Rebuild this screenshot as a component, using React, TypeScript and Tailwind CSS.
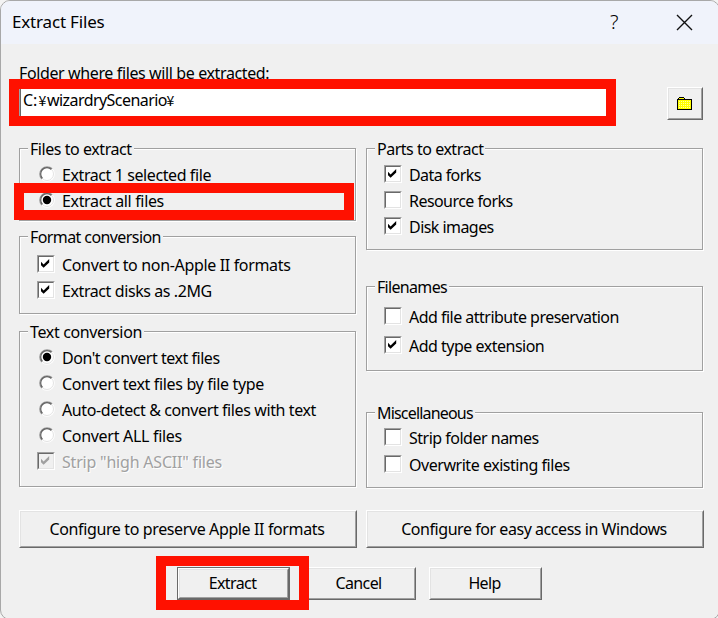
import type { ReactNode } from "react";

function CheckMark({ color }: { color: string }) {
  return (
    <svg width="14" height="14" viewBox="0 0 14 14" className="block">
      <path d="M2 4.8 L4.6 7.4 L10.2 2 V5.4 L4.6 10.8 L2 8.2 Z" fill={color} />
    </svg>
  );
}

function CheckBox({ checked, disabled }: { checked?: boolean; disabled?: boolean }) {
  return (
    <span className="block size-[18px] shrink-0 border border-t-[#a0a0a0] border-l-[#a0a0a0] border-r-white border-b-white">
      <span
        className={`block size-4 border border-t-[#696969] border-l-[#696969] border-r-[#e3e3e3] border-b-[#e3e3e3] ${disabled ? "bg-[#f0f0f0]" : "bg-white"}`}
      >
        {checked && <CheckMark color={disabled ? "#a0a0a0" : "#000000"} />}
      </span>
    </span>
  );
}

function Radio({ checked }: { checked?: boolean }) {
  return (
    <svg width="18" height="18" viewBox="0 0 18 18" className="block shrink-0">
      <circle cx="10" cy="9" r="7.8" fill="#ffffff" />
      <path d="M4.84 14.16 A7.3 7.3 0 0 1 15.16 3.84" fill="none" stroke="#959595" strokeWidth="1.3" />
      <path d="M5.54 13.46 A6.3 6.3 0 0 1 14.46 4.54" fill="none" stroke="#606060" strokeWidth="1.2" />
      <path d="M5.4 13.6 A6.5 6.5 0 0 0 14.6 4.4" fill="none" stroke="#e3e3e3" strokeWidth="1" />
      {checked && <circle cx="10" cy="9" r="4.2" fill="#000000" />}
    </svg>
  );
}

type OptionProps = {
  kind?: "check" | "radio";
  checked?: boolean;
  disabled?: boolean;
  height?: string;
  tracking?: string;
  children: ReactNode;
};

function Option({ kind = "check", checked, disabled, height = "h-[26px]", tracking = "", children }: OptionProps) {
  return (
    <label className={`flex items-center gap-[7px] ${height}`}>
      {kind === "radio" ? <Radio checked={checked} /> : <CheckBox checked={checked} disabled={disabled} />}
      <span
        className={`pt-0.5 whitespace-nowrap ${tracking} ${disabled ? "text-[#a0a0a0] [text-shadow:1px_1px_0_#fff]" : ""}`}
      >
        {children}
      </span>
    </label>
  );
}

type GroupProps = { title: string; box: string; tracking?: string; children: ReactNode };

function Group({ title, box, tracking = "", children }: GroupProps) {
  return (
    <section
      className={`w-[337px] border border-[#a0a0a0] pl-[17px] shadow-[1px_1px_0_#fff,inset_1px_1px_0_#fff] ${box}`}
    >
      <h2
        className={`-mt-[11px] -ml-[9px] flex h-[23px] w-fit items-start bg-[#f0f0f0] px-0.5 pt-px whitespace-nowrap ${tracking}`}
      >
        {title}
      </h2>
      {children}
    </section>
  );
}

function PushButton({ box, tracking = "", children }: { box: string; tracking?: string; children: ReactNode }) {
  return (
    <button
      className={`shrink-0 border border-t-white border-l-white border-r-[#696969] border-b-[#696969] ${box}`}
    >
      <span
        className={`flex size-full items-center justify-center border border-t-[#e3e3e3] border-l-[#e3e3e3] border-r-[#a0a0a0] border-b-[#a0a0a0] pr-0.5 whitespace-nowrap ${tracking}`}
      >
        {children}
      </span>
    </button>
  );
}

function FolderIcon() {
  return (
    <svg width="15" height="14" viewBox="0 0 15 14" shapeRendering="crispEdges">
      <defs>
        <pattern id="dither" width="2" height="2" patternUnits="userSpaceOnUse">
          <rect width="2" height="2" fill="#ffff00" />
          <rect width="1" height="1" fill="#ffffa0" />
        </pattern>
      </defs>
      <path d="M1 3 V1 H7 V3 H14 V12 H1 Z" fill="url(#dither)" />
      <path d="M2 0 H7 V1 H8 V2 H15 V13 H0 V2 H1 V1 H2 Z M1 3 V12 H14 V3 Z M2 1 V2 H7 V1 Z" fill="#000000" fillRule="evenodd" />
    </svg>
  );
}

function Yen() {
  return (
    <span className="w-[9px] text-center font-['Noto_Sans_CJK_JP','Noto_Sans',sans-serif] text-[14px] tracking-normal">
      ¥
    </span>
  );
}

export default function App() {
  return (
    <div className="relative h-[618px] w-[718px] overflow-hidden bg-[#f3f3f3] font-['Noto_Sans','Noto_Sans_CJK_JP',sans-serif] text-[16px] leading-5 text-black">
      <div className="h-[620px] w-[720px] overflow-hidden rounded-[10px] border border-[#a8a8a8] bg-[#f0f0f0]">
        <header className="flex h-[43px] items-center bg-[#f0f3fb] pl-[11px]">
          <h1 className="w-[597px] pb-0.5 text-[17px] tracking-[-0.18px]">Extract Files</h1>
          <span className="w-[67px] pb-0.5 pl-px text-[20px] font-light">?</span>
          <svg width="17" height="17" viewBox="0 0 17 17" fill="none" stroke="#111" strokeWidth="1.4">
            <path d="M1 1 L16 16 M16 1 L1 16" />
          </svg>
        </header>

        <main className="pl-[18px]">
          <div className="flex h-[76px] gap-[59px]">
            <div className="w-[589px] pt-[19px]">
              <p className="h-6 tracking-[-0.38px] whitespace-nowrap">Folder where files will be extracted:</p>
              <div className="h-[30px] border border-t-[#a0a0a0] border-l-[#a0a0a0] border-r-white border-b-white">
                <div className="flex size-full items-baseline border-t border-l border-[#696969] bg-white pt-px pl-[2px]">
                  <span className="w-[15px]">C:</span>
                  <Yen />
                  <span className="w-[119px] tracking-[-0.56px]">wizardryScenario</span>
                  <Yen />
                </div>
              </div>
            </div>
            <div className="pt-[43px]">
              <PushButton box="h-[33px] w-9">
                <FolderIcon />
              </PushButton>
            </div>
          </div>

          <div className="flex gap-2.5 pt-[28px]">
            <div className="flex flex-col">
              <Group title="Files to extract" tracking="tracking-[-0.44px]" box="h-[73px]">
                <Option kind="radio" tracking="tracking-[-0.41px]">Extract 1 selected file</Option>
                <Option kind="radio" tracking="tracking-[-0.35px]" checked>Extract all files</Option>
              </Group>
              <Group title="Format conversion" tracking="tracking-[-0.59px]" box="mt-[15px] h-[78px]">
                <div className="h-[2px]" />
                <Option tracking="tracking-[-0.34px]" checked>Convert to non-Apple II formats</Option>
                <Option tracking="tracking-[-0.41px]" checked>Extract disks as .2MG</Option>
              </Group>
              <Group title="Text conversion" tracking="tracking-[-0.35px]" box="mt-[17px] h-[156px]">
                <Option kind="radio" tracking="tracking-[-0.47px]" checked>Don't convert text files</Option>
                <Option kind="radio" tracking="tracking-[-0.34px]">Convert text files by file type</Option>
                <Option kind="radio" tracking="tracking-[-0.4px]">Auto-detect &amp; convert files with text</Option>
                <Option kind="radio" tracking="tracking-[-0.3px]">Convert ALL files</Option>
                <Option tracking="tracking-[-0.2px]" checked disabled>Strip "high ASCII" files</Option>
              </Group>
            </div>
            <div className="flex flex-col">
              <Group title="Parts to extract" tracking="tracking-[-0.48px]" box="h-[102px]">
                <Option tracking="tracking-[-0.58px]" checked>Data forks</Option>
                <Option tracking="tracking-[-0.55px]">Resource forks</Option>
                <Option tracking="tracking-[-0.55px]" checked>Disk images</Option>
              </Group>
              <Group title="Filenames" tracking="tracking-[-0.68px]" box="mt-[36px] h-[85px]">
                <div className="h-[2px]" />
                <Option height="h-[29px]" tracking="tracking-[-0.52px]">Add file attribute preservation</Option>
                <Option height="h-[29px]" tracking="tracking-[-0.5px]" checked>Add type extension</Option>
              </Group>
              <Group title="Miscellaneous" tracking="tracking-[-0.82px]" box="mt-[41px] h-[76px]">
                <Option height="h-6" tracking="tracking-[-0.5px]">Strip folder names</Option>
                <Option height="h-[30px]" tracking="tracking-[-0.46px]">Overwrite existing files</Option>
              </Group>
            </div>
          </div>

          <div className="flex gap-[9px] pt-[22px]">
            <PushButton box="h-[38px] w-[338px]" tracking="tracking-[-0.38px]">Configure to preserve Apple II formats</PushButton>
            <PushButton box="h-[38px] w-[338px]" tracking="tracking-[-0.45px]">Configure for easy access in Windows</PushButton>
          </div>

          <div className="flex gap-[13px] pt-[19px] pl-[158px]">
            <div className="h-[33px] w-[113px] border border-[#696969]">
              <PushButton box="h-full w-full" tracking="tracking-[-0.6px] pb-0.5">Extract</PushButton>
            </div>
            <PushButton box="h-[33px] w-[113px]" tracking="tracking-[-0.6px] pb-0.5">Cancel</PushButton>
            <PushButton box="h-[33px] w-[113px]" tracking="tracking-[-0.7px] pb-0.5">Help</PushButton>
          </div>
        </main>
      </div>

      <div className="absolute top-[79px] left-[9px] h-[47px] w-[607px] border-10 border-[#ff1100]" />
      <div className="absolute top-[183px] left-[14px] h-[37px] w-[340px] border-10 border-[#ff1100]" />
      <div className="absolute top-[556px] left-[156px] h-[54px] w-[153px] border-10 border-[#ff1100]" />
    </div>
  );
}
